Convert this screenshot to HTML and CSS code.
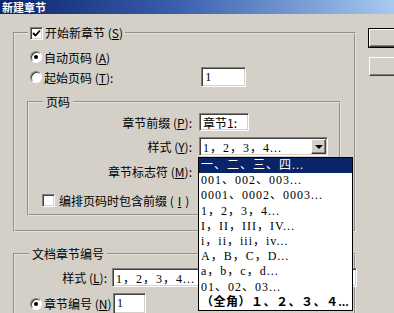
FILE: index.html
```html
<!DOCTYPE html>
<html lang="zh-CN">
<head>
  <meta charset="UTF-8" />
  <title>新建章节</title>
  <link rel="stylesheet" href="styles.css">
</head>
<body>
  <div class="window">
    <div class="titlebar">新建章节</div>

    <div class="content">
      <div class="main">

        <fieldset class="group group-start">
          <legend class="legend-check">
            <span class="box">
              <svg width="9" height="9" viewBox="0 0 9 9"><polyline points="1,4 3.5,6.5 8,1.5" fill="none" stroke="#000" stroke-width="1.8"/></svg>
            </span>
            开始新章节 (<u>S</u>)
          </legend>

          <div class="radio-row"><span class="radio on"></span>自动页码 (<u>A</u>)</div>
          <div class="radio-row">
            <span class="radio"></span>起始页码 (<u>T</u>):
            <span class="field field-start">1</span>
          </div>

          <fieldset class="group group-page">
            <legend class="legend-text">页码</legend>
            <div class="form-grid">
              <span class="lbl">章节前缀 (<u>P</u>):</span>
              <span class="field field-prefix">章节1:</span>

              <span class="lbl">样式 (<u>Y</u>):</span>
              <span class="field select select-style">1，2，3，4...<span class="arrow"></span></span>

              <span class="lbl">章节标志符 (<u>M</u>):</span>
              <span class="field field-marker"></span>
            </div>
            <div class="check-row"><span class="box"></span>编排页码时包含前缀 (<u>I</u>)</div>
          </fieldset>
        </fieldset>

        <fieldset class="group group-doc">
          <legend class="legend-text">文档章节编号</legend>
          <div class="doc-grid">
            <span class="lbl">样式 (<u>L</u>):</span>
            <span class="field select select-doc">1，2，3，4...</span>

            <span class="radio-lbl"><span class="radio on"></span>章节编号 (<u>N</u>)</span>
            <span class="field field-num">1</span>
          </div>
        </fieldset>
      </div>

      <div class="side">
        <button class="btn default"></button>
        <button class="btn"></button>
      </div>
    </div>

    <!-- lista desplegable del estilo -->
    <ul class="dropdown">
      <li class="sel">一、二、三、四...</li>
      <li>001、002、003...</li>
      <li>0001、0002、0003...</li>
      <li>1，2，3，4...</li>
      <li>I，II，III，IV...</li>
      <li>i，ii，iii，iv...</li>
      <li>A，B，C，D...</li>
      <li>a，b，c，d...</li>
      <li>01、02、03...</li>
      <li class="wide">（全角）１、２、３、４...</li>
    </ul>
  </div>
</body>
</html>
```

FILE: styles.css
```css
* {
  box-sizing: border-box;
}

body {
  margin: 0;
  background: #d4d0c8;
  font-family: "Noto Sans CJK SC", sans-serif;
  font-size: 12px;
  color: #000;
}

.window {
  position: relative;
  width: 394px;
  height: 313px;
  overflow: hidden;
  background: #d4d0c8;
}

.titlebar {
  height: 14px;
  line-height: 14px;
  padding-left: 2px;
  color: #fff;
  font-size: 11px;
  font-weight: bold;
  background: linear-gradient(to right, #0a246a, #3a5fae 45%, #a6caf0);
}

.content {
  display: flex;
}

.main {
  width: 357px;
  padding-left: 13px;
  padding-top: 12px;
}

u {
  text-decoration: underline;
}

/* Marcos de grupo */
.group {
  margin: 0;
  padding: 0;
  border: 2px groove #e6e3dd;
  min-width: 0;
}

.group legend {
  line-height: 14px;
  height: 14px;
  padding: 0 2px;
  margin-left: 13px;
  display: flex;
  align-items: center;
  white-space: nowrap;
}

.legend-check .box {
  margin-right: 2px;
}

.legend-text {
  padding: 0 3px !important;
  margin-left: 14px !important;
}

.group-start {
  width: 343px;
  padding-top: 7px;
  padding-bottom: 14px;
}

.radio-row {
  height: 20px;
  display: flex;
  align-items: center;
  padding-left: 15px;
  white-space: nowrap;
}

.radio-row .field-start {
  margin-left: 88px;
}

.group-page {
  margin: 8px 13px 0 12px;
  padding-top: 4px;
  padding-bottom: 7px;
}

.form-grid {
  display: grid;
  grid-template-columns: 163px 1fr;
  column-gap: 7px;
  row-gap: 6px;
  align-items: center;
}

.lbl {
  text-align: right;
  white-space: nowrap;
}

.check-row {
  display: flex;
  align-items: center;
  gap: 4px;
  padding-left: 13px;
  margin-top: 13px;
  height: 14px;
}

.group-doc {
  width: 343px;
  margin-top: 15px;
  padding-top: 7px;
  height: 90px;
}

.doc-grid {
  display: grid;
  grid-template-columns: 92px 1fr;
  column-gap: 5px;
  row-gap: 6px;
  align-items: center;
}

.radio-lbl {
  display: flex;
  align-items: center;
  padding-left: 15px;
  white-space: nowrap;
}

/* Controles */
.field {
  display: flex;
  align-items: center;
  height: 18px;
  padding-left: 3px;
  background: #fff;
  border: 1px solid;
  border-color: #808080 #fff #fff #808080;
  box-shadow: inset 1px 1px 0 #404040, inset -1px -1px 0 #d4d0c8;
  font-family: "Liberation Serif", "Noto Sans CJK SC", serif;
  white-space: nowrap;
}

.field-start {
  width: 45px;
  height: 20px;
}

.field-prefix {
  width: 50px;
  font-family: "Noto Sans CJK SC", sans-serif;
}

.select {
  position: relative;
  height: 19px;
  letter-spacing: 1px;
}

.select-style {
  width: 129px;
}

.select-doc {
  width: 245px;
}

.field-marker {
  width: 129px;
}

.field-num {
  width: 33px;
  height: 21px;
  margin-left: 1px;
}

.arrow {
  position: absolute;
  right: 1px;
  top: 1px;
  width: 15px;
  height: 15px;
  background: #d4d0c8;
  border: 1px solid;
  border-color: #fff #404040 #404040 #fff;
  box-shadow: inset -1px -1px 0 #808080;
}

.arrow::after {
  content: "";
  position: absolute;
  left: 3px;
  top: 5px;
  border-left: 4px solid transparent;
  border-right: 4px solid transparent;
  border-top: 4px solid #000;
}

.box {
  width: 13px;
  height: 13px;
  flex: none;
  display: inline-flex;
  align-items: center;
  justify-content: center;
  background: #fff;
  border: 1px solid;
  border-color: #808080 #fff #fff #808080;
  box-shadow: inset 1px 1px 0 #404040, inset -1px -1px 0 #d4d0c8;
}

.radio {
  position: relative;
  width: 12px;
  height: 12px;
  flex: none;
  margin-right: 2px;
  border-radius: 50%;
  background: #fff;
  border: 1px solid;
  border-color: #808080 #fff #fff #808080;
  box-shadow: inset 1px 1px 0 #404040;
}

.radio.on::after {
  content: "";
  position: absolute;
  left: 3px;
  top: 3px;
  width: 4px;
  height: 4px;
  border-radius: 50%;
  background: #000;
}

/* Botones laterales */
.side {
  display: flex;
  flex-direction: column;
  gap: 10px;
  padding-left: 13px;
  padding-top: 15px;
}

.btn {
  width: 75px;
  height: 19px;
  padding: 0;
  background: #d4d0c8;
  border: 1px solid;
  border-color: #fff #404040 #404040 #fff;
  box-shadow: inset -1px -1px 0 #808080;
}

.btn.default {
  height: 18px;
  outline: 1px solid #000;
}

/* Lista desplegable */
.dropdown {
  position: absolute;
  left: 198px;
  top: 157px;
  width: 155px;
  margin: 0;
  padding: 0;
  list-style: none;
  background: #fff;
  border: 1px solid #000;
  font-family: "Liberation Serif", "Noto Sans CJK SC", serif;
}

.dropdown li {
  height: 15.2px;
  line-height: 15px;
  padding-left: 2px;
  white-space: nowrap;
  letter-spacing: 1px;
}

.dropdown li.sel {
  background: #0a246a;
  color: #fff;
}

.dropdown li.wide {
  font-weight: bold;
  letter-spacing: 0.5px;
}
```
